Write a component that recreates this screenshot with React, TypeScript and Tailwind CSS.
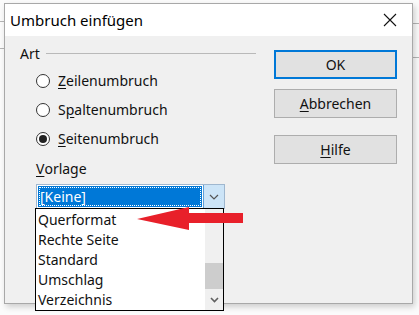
import React from 'react';

const font = { fontFamily: '"Noto Sans", "Open Sans", sans-serif' };

function Radio({ label, mn, checked }: { label: string; mn: number; checked?: boolean }) {
  return (
    <div className="flex items-center h-[29px]">
      <span className="w-[14px] h-[14px] rounded-full border border-[#333] bg-white flex items-center justify-center">
        {checked && <span className="w-[8px] h-[8px] rounded-full bg-[#222]" />}
      </span>
      <span className="ml-[8px]">
        {label.slice(0, mn)}
        <span className="underline underline-offset-2">{label[mn]}</span>
        {label.slice(mn + 1)}
      </span>
    </div>
  );
}

function Button({ children, primary }: { children: React.ReactNode; primary?: boolean }) {
  return (
    <div
      className={`w-[123px] h-[29px] flex items-center justify-center bg-[#e1e1e1] ${
        primary ? 'border-2 border-[#0078d7]' : 'border border-[#adadad]'
      }`}
    >
      {children}
    </div>
  );
}

export default function App() {
  return (
    <div className="relative w-[419px] h-[315px] bg-[#fbfbfb] overflow-hidden text-[14px] text-[#111]" style={font}>
      {/* window behind */}
      <div className="absolute left-0 top-[21px] w-[4px] h-px bg-[#b5b5b5]" />
      <div className="absolute left-0 top-[48px] w-[4px] h-px bg-[#b5b5b5]" />
      <div className="absolute right-0 top-[23px] w-[6px] h-px bg-[#b5b5b5]" />
      <div className="absolute right-0 top-[57px] w-[6px] h-px bg-[#b5b5b5]" />

      {/* dialog */}
      <div className="absolute left-[4px] top-[3px] w-[409px] h-[301px] border border-[#a8a8a8] bg-[#f0f0f0] shadow-[2px_3px_6px_rgba(0,0,0,0.18)] flex flex-col">
        <div className="h-[32px] bg-white flex items-center justify-between pl-[5px] pr-[15px] shrink-0">
          <span className="text-[15px] text-[#000]">Umbruch einfügen</span>
          <svg width="14" height="14" viewBox="0 0 14 14">
            <path d="M1 1 L13 13 M13 1 L1 13" stroke="#111" strokeWidth="1.1" />
          </svg>
        </div>

        <div className="flex pt-[7px] pl-[15px]">
          {/* left column */}
          <div className="w-[236px]">
            <div className="flex items-center h-[20px]">
              <span>Art</span>
              <span className="flex-1 h-px bg-[#b9b9b9] ml-[6px]" />
            </div>
            <div className="pl-[16px] mt-[3px]">
              <Radio label="Zeilenumbruch" mn={0} />
              <Radio label="Spaltenumbruch" mn={1} />
              <Radio label="Seitenumbruch" mn={0} checked />
              <div className="h-[20px] flex items-center mt-[5px] mb-[6px]">
                <span className="underline underline-offset-2">V</span>orlage
              </div>

              {/* combobox */}
              <div className="relative w-[189px]">
                <div className="h-[25px] border border-[#9fb7cf] flex bg-white">
                  <div className="flex-1 m-px bg-[#0078d7] outline-1 outline-dotted outline-offset-[-2px] outline-white text-white flex items-center pl-[2px]">
                    [Keine]
                  </div>
                  <div className="w-[21px] border-l border-[#5d9fd8] bg-[#cce4f7] flex items-center justify-center">
                    <svg width="10" height="6" viewBox="0 0 10 6">
                      <path d="M1 1 L5 5 L9 1" fill="none" stroke="#555" strokeWidth="1.2" />
                    </svg>
                  </div>
                </div>

                {/* open list */}
                <div className="absolute left-[-1px] top-[24px] w-[189px] h-[103px] border border-black bg-white flex z-10">
                  <div className="flex-1 pl-[2px] pt-px leading-[20px]">
                    <div>Querformat</div>
                    <div>Rechte Seite</div>
                    <div>Standard</div>
                    <div>Umschlag</div>
                    <div>Verzeichnis</div>
                  </div>
                  <div className="w-[18px] bg-[#f0f0f0] flex flex-col">
                    <div className="h-[54px]" />
                    <div className="h-[26px] bg-[#cdcdcd]" />
                    <div className="flex-1 flex items-center justify-center">
                      <svg width="9" height="6" viewBox="0 0 9 6">
                        <path d="M1 1 L4.5 4.5 L8 1" fill="none" stroke="#606060" strokeWidth="1.6" />
                      </svg>
                    </div>
                  </div>
                </div>
              </div>
            </div>
          </div>

          {/* buttons */}
          <div className="ml-[18px] flex flex-col gap-[10px] mt-[7px]">
            <Button primary>OK</Button>
            <Button>
              <span>
                <span className="underline underline-offset-2">A</span>bbrechen
              </span>
            </Button>
            <div className="mt-[7px]">
              <Button>
                <span>
                  <span className="underline underline-offset-2">H</span>ilfe
                </span>
              </Button>
            </div>
          </div>
        </div>
      </div>

      {/* red arrow */}
      <svg className="absolute left-0 top-0 z-20" width="419" height="315" viewBox="0 0 419 315">
        <polygon points="137,219 189,207 189,213 243,213 243,223 189,223 189,230" fill="#e8202a" />
      </svg>
    </div>
  );
}
